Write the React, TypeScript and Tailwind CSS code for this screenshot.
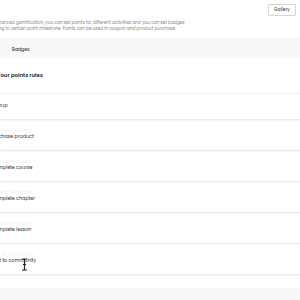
const rules = [
    { label: "Signup", ghost: false },
    { label: "Purchase product", ghost: true },
    { label: "Complete course", ghost: true },
    { label: "Complete chapter", ghost: true },
    { label: "Complete lesson", ghost: true },
    { label: "Post to community", ghost: true },
];

export default function App() {
    return (
        <div className="relative w-[300px] h-[300px] overflow-hidden bg-white font-['Poppins','Inter',sans-serif]">
            {/* Header */}
            <div className="flex justify-end pt-[4px] pr-[4px]">
                <button className="h-[12px] w-[28px] border border-[#d6d6d6] bg-white text-[4.5px] text-[#333] rounded-[1px] flex items-center justify-center">
                    Gallery
                </button>
            </div>

            {/* Description */}
            <div className="ml-[-18px] mt-[4px] text-[4.3px] leading-[6px] text-[#8a8a8a] whitespace-nowrap">
                <p>With advanced gamification, you can set points for different activities and you can set badges</p>
                <p>according to certain point milestone. Points can be used in coupon and product purchase</p>
            </div>

            {/* Tabs */}
            <div className="mt-[5px] h-[21px] bg-[#f9f7fa] flex items-end pb-[5px] pl-[12px]">
                <span className="text-[4.6px] leading-[6px] text-[#444] font-medium">Badges</span>
            </div>

            {/* Title */}
            <div className="ml-[-3px] mt-[13px] h-[22px] text-[5.4px] leading-[8px] font-semibold text-[#222] whitespace-nowrap">
                Your points rules
            </div>

            {/* Rules */}
            <div className="border-t border-[#efefef]">
                {rules.map((r, i) => (
                    <div
                        key={r.label}
                        className={`flex flex-col justify-end border-b border-[#ebebeb] shadow-[0_1px_1px_rgba(0,0,0,0.03)] pb-[10px] ${i === 0 ? "h-[26px]" : "h-[31px]"}`}
                    >
                        {r.ghost && (
                            <span className="ml-[-9px] text-[4.6px] leading-[7px] text-[#f1f1f1] whitespace-nowrap">
                                {r.label}
                            </span>
                        )}
                        <span className="ml-[-9px] text-[4.8px] leading-[6px] text-[#333] whitespace-nowrap">
                            {r.label}
                        </span>
                    </div>
                ))}
            </div>

            {/* Bottom band */}
            <div className="mt-[13px] h-[20px] bg-[#f7f5f8]" />

            {/* Text cursor */}
            <svg className="absolute left-[21px] top-[258px]" width="7" height="13" viewBox="0 0 7 13">
                <path d="M1 1h2.5M3.5 1h2.5M3.5 1v11M1 12h2.5M3.5 12h2.5M2 6.5h3" stroke="#222" strokeWidth="1.2" fill="none" />
            </svg>
        </div>
    );
}
